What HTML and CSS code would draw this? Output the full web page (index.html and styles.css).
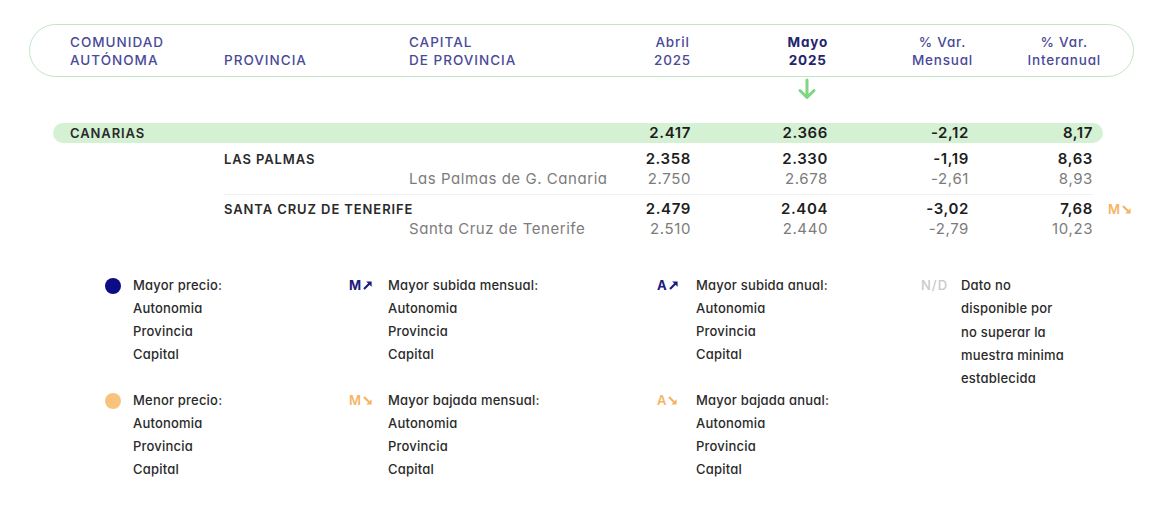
FILE: index.html
```html
<!DOCTYPE html>
<html lang="es">
<head>
<meta charset="utf-8">
<title>Precios Canarias</title>
<link rel="stylesheet" href="styles.css">
</head>
<body>
<div class="page">
  <div class="head">
    <div class="hc"><span>COMUNIDAD</span><span>AUTÓNOMA</span></div>
    <div class="hc"><span>PROVINCIA</span></div>
    <div class="hc"><span>CAPITAL</span><span>DE PROVINCIA</span></div>
    <div class="hc num"><div class="hb"><span>Abril</span><span>2025</span></div></div>
    <div class="hc num"><div class="hb cur"><span>Mayo</span><span>2025</span></div></div>
    <div class="hc num"><div class="hb sh4"><span>% Var.</span><span>Mensual</span></div></div>
    <div class="hc num"><div class="hb sh8"><span>% Var.</span><span>Interanual</span></div></div>
  </div>

  <div class="tbl">
    <div class="arrow-row">
      <div class="arrow-cell">
        <svg class="arrow" width="20" height="22" viewBox="0 0 20 22"><path d="M10 2 V19 M3 12.5 L10 19.5 L17 12.5" fill="none" stroke="#7fd581" stroke-width="3" stroke-linecap="round" stroke-linejoin="round"/></svg>
      </div>
    </div>

    <div class="r main">
      <div class="c name">CANARIAS</div><div class="c"></div><div class="c"></div>
      <div class="c v">2.417</div><div class="c v">2.366</div><div class="c v">-2,12</div><div class="c v">8,17</div>
    </div>

    <div class="grp">
      <div class="r">
        <div class="c"></div><div class="c name">LAS PALMAS</div><div class="c"></div>
        <div class="c v">2.358</div><div class="c v">2.330</div><div class="c v">-1,19</div><div class="c v">8,63</div>
      </div>
      <div class="r sub">
        <div class="c"></div><div class="c"></div><div class="c cap">Las Palmas de G. Canaria</div>
        <div class="c v">2.750</div><div class="c v">2.678</div><div class="c v">-2,61</div><div class="c v">8,93</div>
      </div>
    </div>

    <div class="grp sep">
      <div class="r">
        <div class="c"></div><div class="c name">SANTA CRUZ DE TENERIFE</div><div class="c"></div>
        <div class="c v">2.479</div><div class="c v">2.404</div><div class="c v">-3,02</div>
        <div class="c v badged">7,68<span class="tag down">M<svg width="9" height="9" viewBox="0 0 9 9"><path d="M1 1 L6.5 6.5" stroke="currentColor" stroke-width="2.2" fill="none"/><path d="M8.6 3.2 V8.6 H3.2 Z" fill="currentColor"/></svg></span></div>
      </div>
      <div class="r sub">
        <div class="c"></div><div class="c"></div><div class="c cap">Santa Cruz de Tenerife</div>
        <div class="c v">2.510</div><div class="c v">2.440</div><div class="c v">-2,79</div><div class="c v">10,23</div>
      </div>
    </div>
  </div>

  <div class="legend">
    <div class="item c1">
      <div class="ico"><span class="dot navy"></span></div>
      <div class="txt"><span>Mayor precio:</span><span>Autonomia</span><span>Provincia</span><span>Capital</span></div>
    </div>
    <div class="item c2">
      <div class="ico"><span class="tag up">M<svg width="9" height="9" viewBox="0 0 9 9"><path d="M1 8 L6.5 2.5" stroke="currentColor" stroke-width="2.2" fill="none"/><path d="M3.2 0.4 H8.6 V5.8 Z" fill="currentColor"/></svg></span></div>
      <div class="txt"><span>Mayor subida mensual:</span><span>Autonomia</span><span>Provincia</span><span>Capital</span></div>
    </div>
    <div class="item c3">
      <div class="ico"><span class="tag up">A<svg width="9" height="9" viewBox="0 0 9 9"><path d="M1 8 L6.5 2.5" stroke="currentColor" stroke-width="2.2" fill="none"/><path d="M3.2 0.4 H8.6 V5.8 Z" fill="currentColor"/></svg></span></div>
      <div class="txt"><span>Mayor subida anual:</span><span>Autonomia</span><span>Provincia</span><span>Capital</span></div>
    </div>
    <div class="item c4 nd">
      <div class="ico"><span class="ndtag">N/D</span></div>
      <div class="txt"><span>Dato no</span><span>disponible por</span><span>no superar la</span><span>muestra minima</span><span>establecida</span></div>
    </div>

    <div class="item c1">
      <div class="ico"><span class="dot orange"></span></div>
      <div class="txt"><span>Menor precio:</span><span>Autonomia</span><span>Provincia</span><span>Capital</span></div>
    </div>
    <div class="item c2">
      <div class="ico"><span class="tag down">M<svg width="9" height="9" viewBox="0 0 9 9"><path d="M1 1 L6.5 6.5" stroke="currentColor" stroke-width="2.2" fill="none"/><path d="M8.6 3.2 V8.6 H3.2 Z" fill="currentColor"/></svg></span></div>
      <div class="txt"><span>Mayor bajada mensual:</span><span>Autonomia</span><span>Provincia</span><span>Capital</span></div>
    </div>
    <div class="item c3">
      <div class="ico"><span class="tag down">A<svg width="9" height="9" viewBox="0 0 9 9"><path d="M1 1 L6.5 6.5" stroke="currentColor" stroke-width="2.2" fill="none"/><path d="M8.6 3.2 V8.6 H3.2 Z" fill="currentColor"/></svg></span></div>
      <div class="txt"><span>Mayor bajada anual:</span><span>Autonomia</span><span>Provincia</span><span>Capital</span></div>
    </div>
  </div>
</div>
</body>
</html>
```

FILE: styles.css
```css
* { box-sizing: border-box; }
html, body { margin: 0; padding: 0; background: #ffffff; }
body {
  font-family: "Inter", "Noto Sans", "Liberation Sans", sans-serif;
  font-feature-settings: "cv11" 1;
  color: #222;
}
.page { padding: 24px 0 0 29px; }

/* header pill */
.head {
  width: 1105px;
  height: 53px;
  border: 1px solid #bfe7c1;
  border-radius: 27px;
  padding: 0 40px;
  display: grid;
  grid-template-columns: 154px 185px 211px 71px 137px 141px 124px;
  align-items: center;
}
.hc {
  height: 36px;
  display: flex;
  flex-direction: column;
  justify-content: flex-end;
  font-size: 13.5px;
  font-weight: 500;
  line-height: 18px;
  letter-spacing: 1px;
  color: #4a4a98;
  white-space: nowrap;
}
.hc.num { align-items: flex-end; letter-spacing: 0.8px; }
.hb { display: flex; flex-direction: column; align-items: center; }
.hb.cur { font-weight: 700; color: #24246e; }
.hb.sh4 { margin-right: -4px; }
.hb.sh8 { margin-right: -8px; }

/* table */
.tbl {
  margin-left: 24px;
  width: 1050px;
  padding: 0 10px 0 17px;
}
.arrow-row {
  display: grid;
  grid-template-columns: 154px 185px 211px 71px 137px 141px 124px;
  height: 46px;
}
.arrow-cell {
  grid-column: 5;
  display: flex;
  justify-content: flex-end;
  padding-right: 11px;
  padding-top: 1px;
}
.r {
  display: grid;
  grid-template-columns: 154px 185px 211px 71px 137px 141px 124px;
  height: 20px;
  align-items: center;
  white-space: nowrap;
}
.r.main {
  background: #d4f1d3;
  border-radius: 10px;
  margin: 0 -10px 0 -17px;
  padding: 0 10px 0 17px;
}
.c { font-size: 15px; line-height: 20px; }
.name {
  font-size: 13px;
  font-weight: 600;
  letter-spacing: 0.9px;
  color: #2a2a2a;
}
.v {
  text-align: right;
  font-weight: 600;
  letter-spacing: 0.6px;
  color: #1d1d1d;
}
.sub .v, .cap {
  font-weight: 400;
  color: #7c7c7c;
}
.cap { letter-spacing: 0.55px; }
.grp { padding-top: 6px; }
.grp.sep { margin-top: 5px; padding-top: 4px; border-top: 1px solid #f1f1f1; margin-left: 154px; }
.grp.sep .r { margin-left: -154px; }
.badged { position: relative; }
.badged .tag { position: absolute; left: calc(100% + 15px); top: 0; line-height: 20px; }

.tag {
  display: inline-flex;
  align-items: center;
  gap: 2px;
  font-size: 13px;
  font-weight: 700;
  letter-spacing: 0;
}
.tag.up { color: #1b1b80; }
.tag.down { color: #f6b463; font-weight: 600; }

/* legend */
.legend {
  margin-top: 35px;
  margin-left: 76px;
  display: grid;
  grid-template-columns: 244px 308px 264px 200px;
  row-gap: 23px;
  font-size: 13px;
  line-height: 23px;
  font-weight: 500;
  letter-spacing: 0.2px;
  color: #2a2a2a;
}
.item { display: flex; }
.ico { height: 23px; display: flex; align-items: center; flex: none; width: 39px; }
.c1 .ico { width: 28px; }
.c4 .ico { width: 40px; }
.c4 { grid-column: 4; grid-row: 1 / span 2; }
.txt { display: flex; flex-direction: column; white-space: nowrap; }
.dot { width: 16px; height: 16px; border-radius: 50%; display: block; }
.dot.navy { background: #0c0c86; }
.dot.orange { background: #f8c47d; }
.ndtag { color: #c9c9c9; letter-spacing: 1px; font-size: 13px; font-weight: 500; }
.nd .txt { line-height: 23.3px; }
```
